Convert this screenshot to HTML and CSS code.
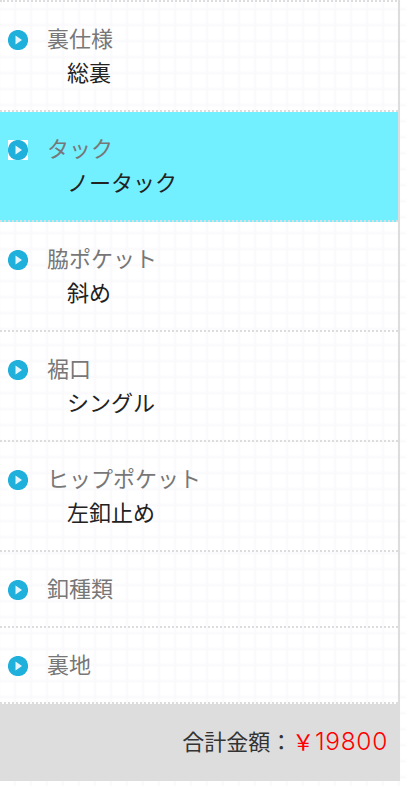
FILE: index.html
```html
<!DOCTYPE html>
<html lang="ja">
<head>
    <meta charset="UTF-8">
    <meta name="viewport" content="width=device-width, initial-scale=1.0">
    <title>オーダー内容</title>
    <link rel="stylesheet" href="styles.css">
</head>
<body>
    <div class="wrap">
        <ul class="spec">
            <li class="item">
                <div class="label">
                    <svg class="ico" viewBox="0 0 20 20"><rect width="20" height="20" fill="#fff"/><circle cx="10" cy="10" r="10.1" fill="#1fb0dc"/><path d="M7.5 5.5 L14 10 L7.5 14.5 Z" fill="#e4f5fb"/></svg>
                    <span>裏仕様</span>
                </div>
                <div class="val">総裏</div>
            </li>
            <li class="item on">
                <div class="label">
                    <svg class="ico" viewBox="0 0 20 20"><rect width="20" height="20" fill="#fff"/><circle cx="10" cy="10" r="10.1" fill="#1fb0dc"/><path d="M7.5 5.5 L14 10 L7.5 14.5 Z" fill="#e4f5fb"/></svg>
                    <span>タック</span>
                </div>
                <div class="val">ノータック</div>
            </li>
            <li class="item">
                <div class="label">
                    <svg class="ico" viewBox="0 0 20 20"><rect width="20" height="20" fill="#fff"/><circle cx="10" cy="10" r="10.1" fill="#1fb0dc"/><path d="M7.5 5.5 L14 10 L7.5 14.5 Z" fill="#e4f5fb"/></svg>
                    <span>脇ポケット</span>
                </div>
                <div class="val">斜め</div>
            </li>
            <li class="item">
                <div class="label">
                    <svg class="ico" viewBox="0 0 20 20"><rect width="20" height="20" fill="#fff"/><circle cx="10" cy="10" r="10.1" fill="#1fb0dc"/><path d="M7.5 5.5 L14 10 L7.5 14.5 Z" fill="#e4f5fb"/></svg>
                    <span>裾口</span>
                </div>
                <div class="val">シングル</div>
            </li>
            <li class="item">
                <div class="label">
                    <svg class="ico" viewBox="0 0 20 20"><rect width="20" height="20" fill="#fff"/><circle cx="10" cy="10" r="10.1" fill="#1fb0dc"/><path d="M7.5 5.5 L14 10 L7.5 14.5 Z" fill="#e4f5fb"/></svg>
                    <span>ヒップポケット</span>
                </div>
                <div class="val">左釦止め</div>
            </li>
            <li class="item">
                <div class="label">
                    <svg class="ico" viewBox="0 0 20 20"><rect width="20" height="20" fill="#fff"/><circle cx="10" cy="10" r="10.1" fill="#1fb0dc"/><path d="M7.5 5.5 L14 10 L7.5 14.5 Z" fill="#e4f5fb"/></svg>
                    <span>釦種類</span>
                </div>
            </li>
            <li class="item">
                <div class="label">
                    <svg class="ico" viewBox="0 0 20 20"><rect width="20" height="20" fill="#fff"/><circle cx="10" cy="10" r="10.1" fill="#1fb0dc"/><path d="M7.5 5.5 L14 10 L7.5 14.5 Z" fill="#e4f5fb"/></svg>
                    <span>裏地</span>
                </div>
            </li>
        </ul>
        <div class="total">合計金額：<span class="price"><span class="yen">￥</span>19800</span></div>
    </div>
</body>
</html>
```

FILE: styles.css
```css
html,body{
    margin: 0;
    padding: 0;
}
body{
    height: 786px;
    overflow: hidden;
    font-family: "Noto Sans CJK JP", "Liberation Sans", sans-serif;
    font-size: 22px;
    /* 薄い格子の背景 */
    background-color: #fff;
    background-image:
        linear-gradient(to right, transparent, #f9f9fc 2px, transparent 4px),
        linear-gradient(to bottom, transparent, #f9f9fc 2px, transparent 4px);
    background-size: 16px 16px;
    background-position: 13px 7px;
}
.wrap{
    width: 400px;
}
.spec{
    margin: 0;
    padding: 0;
    list-style: none;
    box-sizing: border-box;
    border-top: 2px dotted #ddd;
    border-right: 2px solid #ddd;
}
.item{
    padding: 18px 0 22px;
    border-bottom: 2px dotted #ddd;
}
/* 選択中の行 */
.item.on{
    background: #72f0ff;
}
.label{
    display: flex;
    align-items: center;
    gap: 19px;
    height: 34px;
    padding-left: 8px;
    color: #777;
}
.ico{
    flex: none;
    width: 20px;
    height: 20px;
    margin-top: 5px;
    filter: blur(.5px);
}
.val{
    height: 34px;
    line-height: 34px;
    padding-left: 67px;
    color: #222;
}
/* 合計 */
.total{
    height: 77px;
    line-height: 73px;
    padding-right: 12px;
    text-align: right;
    background: #ddd;
    color: #333;
}
.price{
    font-family: Inter, "Noto Sans CJK JP", sans-serif;
    font-weight: 300;
    font-size: 24.5px;
    letter-spacing: .7px;
    color: #f00;
}
.yen{
    font-family: "Noto Sans CJK JP", sans-serif;
    font-size: 22px;
    font-weight: 400;
}
```
